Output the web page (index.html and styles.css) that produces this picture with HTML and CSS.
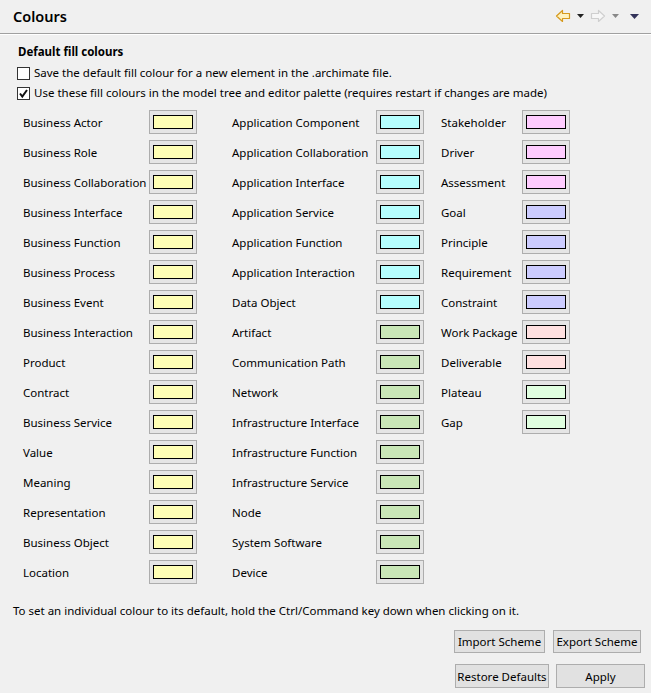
FILE: index.html
```html
<!DOCTYPE html>
<html>
<head>
<meta charset="utf-8">
<link rel="stylesheet" href="styles.css">
</head>
<body>
<div class="page">
  <header class="header">
    <h1 class="title">Colours</h1>
    <div class="nav">
      <svg class="arrow" width="16" height="14" viewBox="0 0 16 14"><path d="M1.5 7 L7.5 1.5 L7.5 4.5 L14.5 4.5 L14.5 9.5 L7.5 9.5 L7.5 12.5 Z" fill="#fff3c0" stroke="#d69a1e" stroke-width="1.2" stroke-linejoin="round"/></svg>
      <svg class="drop" width="7" height="4" viewBox="0 0 7 4"><path d="M0 0 H7 L3.5 4 Z" fill="#222"/></svg>
      <svg class="arrow" width="16" height="14" viewBox="0 0 16 14"><path d="M14.5 7 L8.5 1.5 L8.5 4.5 L1.5 4.5 L1.5 9.5 L8.5 9.5 L8.5 12.5 Z" fill="#f7f7f7" stroke="#cfcfcf" stroke-width="1.2" stroke-linejoin="round"/></svg>
      <svg class="drop" width="7" height="4" viewBox="0 0 7 4"><path d="M0 0 H7 L3.5 4 Z" fill="#888"/></svg>
      <svg class="drop menu" width="9" height="5" viewBox="0 0 9 5"><path d="M0 0 H9 L4.5 5 Z" fill="#33335a"/></svg>
    </div>
  </header>
  <main class="content">
    <div class="section-title">Default fill colours</div>
    <label class="check first"><span class="box"></span>Save the default fill colour for a new element in the .archimate file.</label>
    <label class="check"><span class="box checked"><svg width="11" height="11" viewBox="0 0 11 11"><path d="M2 5.5 L4.3 8.5 L9 2" fill="none" stroke="#111" stroke-width="2"/></svg></span>Use these fill colours in the model tree and editor palette (requires restart if changes are made)</label>

    <div class="grid">
      <div class="col col1">
        <div class="row"><span class="label">Business Actor</span><span class="swatch"><span class="fill biz"></span></span></div>
        <div class="row"><span class="label">Business Role</span><span class="swatch"><span class="fill biz"></span></span></div>
        <div class="row"><span class="label">Business Collaboration</span><span class="swatch"><span class="fill biz"></span></span></div>
        <div class="row"><span class="label">Business Interface</span><span class="swatch"><span class="fill biz"></span></span></div>
        <div class="row"><span class="label">Business Function</span><span class="swatch"><span class="fill biz"></span></span></div>
        <div class="row"><span class="label">Business Process</span><span class="swatch"><span class="fill biz"></span></span></div>
        <div class="row"><span class="label">Business Event</span><span class="swatch"><span class="fill biz"></span></span></div>
        <div class="row"><span class="label">Business Interaction</span><span class="swatch"><span class="fill biz"></span></span></div>
        <div class="row"><span class="label">Product</span><span class="swatch"><span class="fill biz"></span></span></div>
        <div class="row"><span class="label">Contract</span><span class="swatch"><span class="fill biz"></span></span></div>
        <div class="row"><span class="label">Business Service</span><span class="swatch"><span class="fill biz"></span></span></div>
        <div class="row"><span class="label">Value</span><span class="swatch"><span class="fill biz"></span></span></div>
        <div class="row"><span class="label">Meaning</span><span class="swatch"><span class="fill biz"></span></span></div>
        <div class="row"><span class="label">Representation</span><span class="swatch"><span class="fill biz"></span></span></div>
        <div class="row"><span class="label">Business Object</span><span class="swatch"><span class="fill biz"></span></span></div>
        <div class="row"><span class="label">Location</span><span class="swatch"><span class="fill biz"></span></span></div>
      </div>
      <div class="col col2">
        <div class="row"><span class="label">Application Component</span><span class="swatch"><span class="fill app"></span></span></div>
        <div class="row"><span class="label">Application Collaboration</span><span class="swatch"><span class="fill app"></span></span></div>
        <div class="row"><span class="label">Application Interface</span><span class="swatch"><span class="fill app"></span></span></div>
        <div class="row"><span class="label">Application Service</span><span class="swatch"><span class="fill app"></span></span></div>
        <div class="row"><span class="label">Application Function</span><span class="swatch"><span class="fill app"></span></span></div>
        <div class="row"><span class="label">Application Interaction</span><span class="swatch"><span class="fill app"></span></span></div>
        <div class="row"><span class="label">Data Object</span><span class="swatch"><span class="fill app"></span></span></div>
        <div class="row"><span class="label">Artifact</span><span class="swatch"><span class="fill tech"></span></span></div>
        <div class="row"><span class="label">Communication Path</span><span class="swatch"><span class="fill tech"></span></span></div>
        <div class="row"><span class="label">Network</span><span class="swatch"><span class="fill tech"></span></span></div>
        <div class="row"><span class="label">Infrastructure Interface</span><span class="swatch"><span class="fill tech"></span></span></div>
        <div class="row"><span class="label">Infrastructure Function</span><span class="swatch"><span class="fill tech"></span></span></div>
        <div class="row"><span class="label">Infrastructure Service</span><span class="swatch"><span class="fill tech"></span></span></div>
        <div class="row"><span class="label">Node</span><span class="swatch"><span class="fill tech"></span></span></div>
        <div class="row"><span class="label">System Software</span><span class="swatch"><span class="fill tech"></span></span></div>
        <div class="row"><span class="label">Device</span><span class="swatch"><span class="fill tech"></span></span></div>
      </div>
      <div class="col col3">
        <div class="row"><span class="label">Stakeholder</span><span class="swatch"><span class="fill mot"></span></span></div>
        <div class="row"><span class="label">Driver</span><span class="swatch"><span class="fill mot"></span></span></div>
        <div class="row"><span class="label">Assessment</span><span class="swatch"><span class="fill mot"></span></span></div>
        <div class="row"><span class="label">Goal</span><span class="swatch"><span class="fill goal"></span></span></div>
        <div class="row"><span class="label">Principle</span><span class="swatch"><span class="fill goal"></span></span></div>
        <div class="row"><span class="label">Requirement</span><span class="swatch"><span class="fill goal"></span></span></div>
        <div class="row"><span class="label">Constraint</span><span class="swatch"><span class="fill goal"></span></span></div>
        <div class="row"><span class="label">Work Package</span><span class="swatch"><span class="fill impl"></span></span></div>
        <div class="row"><span class="label">Deliverable</span><span class="swatch"><span class="fill impl"></span></span></div>
        <div class="row"><span class="label">Plateau</span><span class="swatch"><span class="fill plat"></span></span></div>
        <div class="row"><span class="label">Gap</span><span class="swatch"><span class="fill plat"></span></span></div>
      </div>
    </div>

    <p class="hint">To set an individual colour to its default, hold the Ctrl/Command key down when clicking on it.</p>

    <div class="buttons scheme">
      <button class="btn import">Import Scheme</button>
      <button class="btn export">Export Scheme</button>
    </div>
    <div class="buttons footer">
      <button class="btn restore">Restore Defaults</button>
      <button class="btn apply">Apply</button>
    </div>
  </main>
</div>
</body>
</html>
```
FILE: styles.css
```css
* { box-sizing: border-box; }
html, body {
  margin: 0;
  padding: 0;
  background: #f0f0f0;
}
body {
  font-family: "Noto Sans", "Open Sans", sans-serif;
  font-size: 11.5px;
  color: #000;
  width: 651px;
  height: 693px;
  overflow: hidden;
}
.page {
  width: 651px;
  height: 693px;
}
.header {
  height: 35px;
  display: flex;
  align-items: center;
  justify-content: space-between;
  border-bottom: 1px solid #fff;
  box-shadow: inset 0 -1px 0 #a0a0a0;
  padding: 0 12px 3px 13px;
}
.title {
  margin: 0;
  font-size: 14.5px;
  font-weight: 600;
  line-height: 20px;
}
.nav {
  display: flex;
  align-items: center;
}
.nav .drop { margin: 1px 6px 0 6px; }
.nav .menu { margin: 1px 0 0 5px; }
.content {
  padding: 9px 0 0 0;
}
.section-title {
  font-weight: 700;
  padding-left: 18px;
  line-height: 16px;
  height: 16px;
}
.check {
  display: flex;
  align-items: center;
  padding-left: 17px;
  height: 20px;
  line-height: 16px;
}
.check.first { margin-top: 3px; }
.box {
  width: 13px;
  height: 13px;
  border: 1px solid #333;
  background: #fff;
  margin-right: 4px;
  display: inline-flex;
  align-items: center;
  justify-content: center;
}
.grid {
  display: flex;
  padding-left: 23px;
  padding-top: 4px;
}
.col { display: flex; flex-direction: column; }
.col1 { width: 209px; }
.col2 { width: 209px; }
.label {
  white-space: nowrap;
  min-width: 0;
}
.col1 .label { flex: 0 0 126px; }
.col2 .label { flex: 0 0 144px; }
.col3 .label { flex: 0 0 81px; }
.row {
  height: 30px;
  display: flex;
  align-items: center;
}
.swatch {
  flex: 0 0 48px;
  height: 24px;
  border: 1px solid #adadad;
  background: #e5e5e5;
  display: flex;
  align-items: center;
  justify-content: center;
}
.fill {
  width: 40px;
  height: 14px;
  border: 1px solid #000;
}
.biz { background: #ffffb5; }
.app { background: #b5ffff; }
.tech { background: #c9e7b7; }
.mot { background: #ffccff; }
.goal { background: #ccccff; }
.impl { background: #ffe0e0; }
.plat { background: #e0ffe0; }
.hint {
  margin: 16px 0 0 13px;
  line-height: 16px;
}
.buttons {
  display: flex;
}
.btn {
  font-family: inherit;
  font-size: 11.5px;
  color: #000;
  background: #e1e1e1;
  border: 1px solid #adadad;
  border-radius: 0;
  height: 23px;
  padding: 0;
  white-space: nowrap;
}
.scheme {
  margin-top: 11px;
  padding-left: 454px;
}
.import { width: 91px; }
.export { width: 88px; margin-left: 8px; }
.footer {
  margin-top: 11px;
  padding-left: 455px;
}
.restore { width: 94px; height: 24px; }
.apply { width: 89px; height: 24px; margin-left: 7px; }
```
